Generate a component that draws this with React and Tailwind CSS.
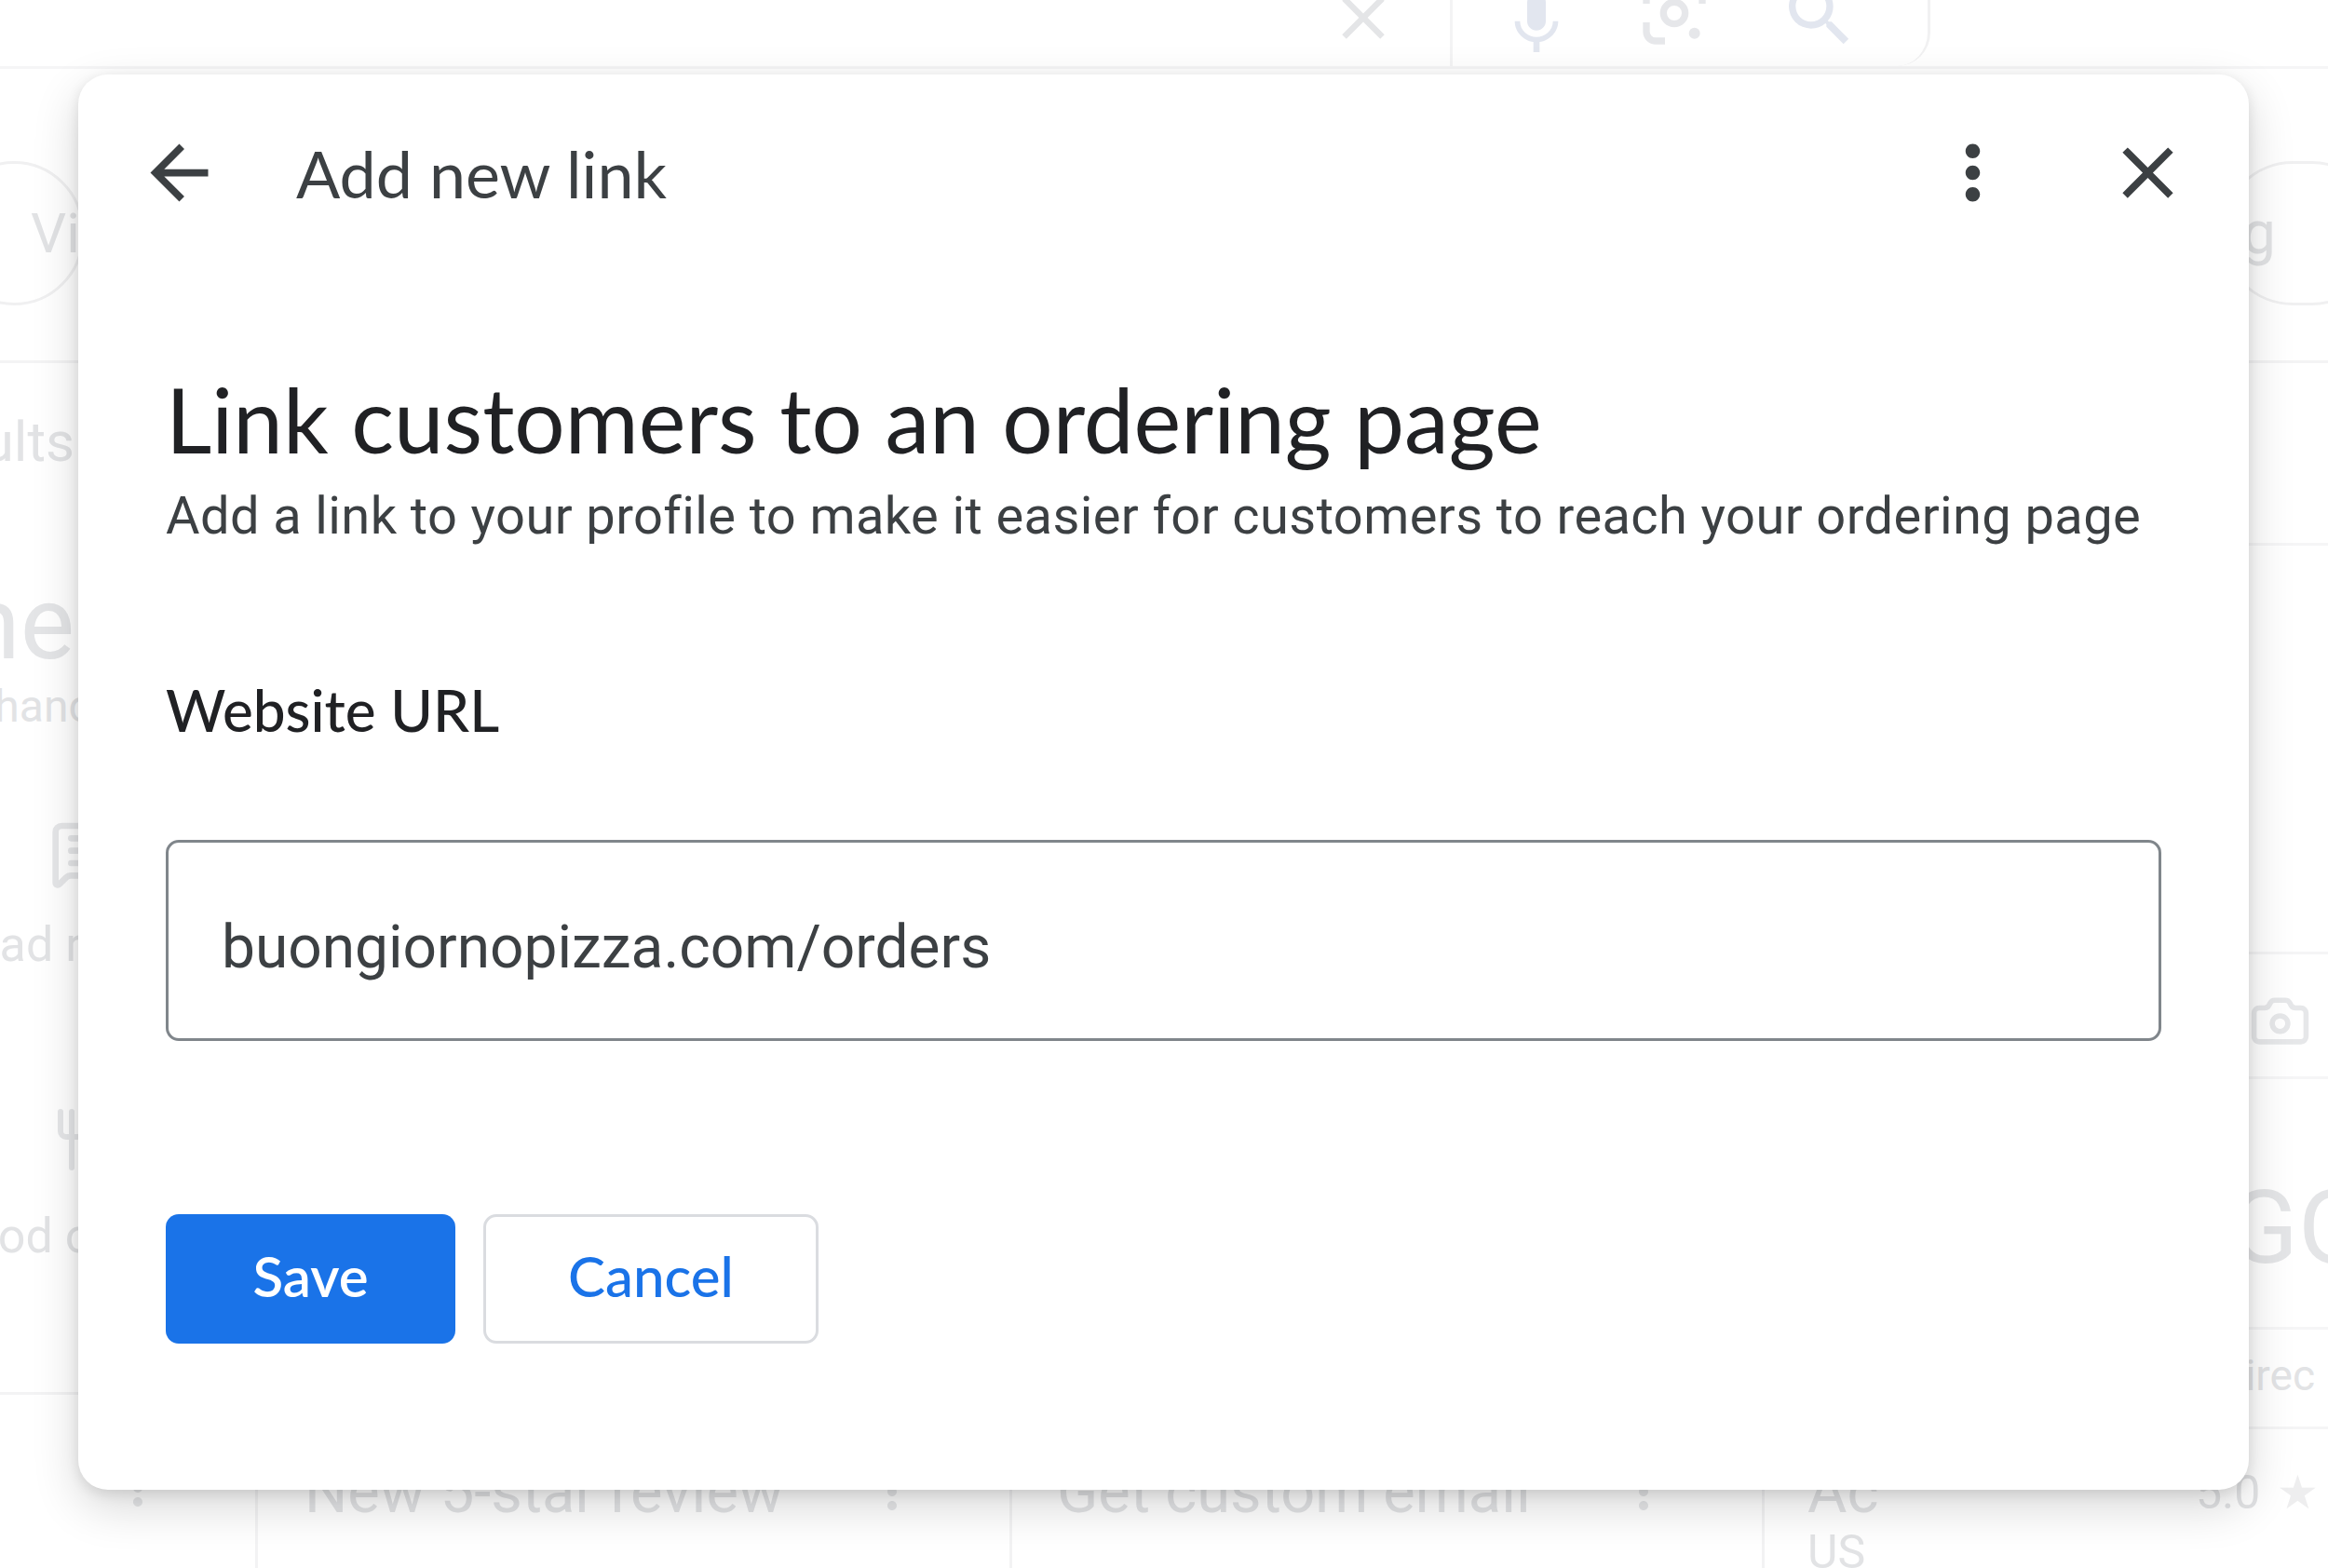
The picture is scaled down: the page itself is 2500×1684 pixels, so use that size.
import React from "react";
import { MessageSquareText, Utensils, Camera } from "lucide-react";

function ArrowBack() {
  return (
    <svg viewBox="0 0 24 24" className="w-[93px] h-[93px] shrink-0 fill-[#3c4043]">
      <path d="M20 11H7.83l5.59-5.59L12 4l-8 8 8 8 1.41-1.41L7.83 13H20v-2z" />
    </svg>
  );
}

function MoreVert({ className = "w-[93px] h-[93px] fill-[#3c4043]" }) {
  return (
    <svg viewBox="0 0 24 24" className={className}>
      <path d="M12 8c1.1 0 2-.9 2-2s-.9-2-2-2-2 .9-2 2 .9 2 2 2zm0 2c-1.1 0-2 .9-2 2s.9 2 2 2 2-.9 2-2-.9-2-2-2zm0 6c-1.1 0-2 .9-2 2s.9 2 2 2 2-.9 2-2-.9-2-2-2z" />
    </svg>
  );
}

function CloseIcon({ className = "w-[93px] h-[93px] shrink-0 fill-[#3c4043]" }) {
  return (
    <svg viewBox="0 0 24 24" className={className}>
      <path d="M19 6.41L17.59 5 12 10.59 6.41 5 5 6.41 10.59 12 5 17.59 6.41 19 12 13.41 17.59 19 19 17.59 13.41 12z" />
    </svg>
  );
}

function MicIcon() {
  return (
    <svg viewBox="0 0 24 24" className="w-[80px] h-[80px] shrink-0 fill-[#e2e6ef]">
      <path d="M12 14c1.66 0 3-1.34 3-3V5c0-1.66-1.34-3-3-3S9 3.34 9 5v6c0 1.66 1.34 3 3 3zm5.3-3c0 3-2.54 5.1-5.3 5.1S6.7 14 6.7 11H5c0 3.41 2.72 6.23 6 6.72V21h2v-3.28c3.28-.48 6-3.3 6-6.72h-1.7z" />
    </svg>
  );
}

function LensIcon() {
  return (
    <svg viewBox="0 0 24 24" className="w-[80px] h-[80px] shrink-0" fill="none" stroke="#e6e7ea" strokeWidth="2.2">
      <path d="M3 9V6a3 3 0 0 1 3-3h3M15 3h3a3 3 0 0 1 3 3v3M3 15v3a3 3 0 0 0 3 3h3" />
      <circle cx="12" cy="12" r="3.5" />
      <circle cx="18.5" cy="18.5" r="1.8" fill="#e6e7ea" stroke="none" />
    </svg>
  );
}

function SearchIcon() {
  return (
    <svg viewBox="0 0 24 24" className="w-[88px] h-[88px] shrink-0 fill-[#e2e6ef]">
      <path d="M15.5 14h-.79l-.28-.27A6.471 6.471 0 0 0 16 9.5 6.5 6.5 0 1 0 9.5 16c1.61 0 3.09-.59 4.230-1.57l.27.28v.79l5 4.99L20.49 19l-4.99-5zm-6 0C7.01 14 5 11.990 5 9.5S7.01 5 9.5 5 14 7.01 14 9.5 11.99 14 9.5 14z" />
    </svg>
  );
}

// faded page that sits behind the dialog
function Backdrop() {
  return (
    <div className="flex flex-col h-full font-['Roboto',sans-serif] text-[#e2e3e5]">
      {/* search bar */}
      <div className="h-[74px] shrink-0 flex border-b-[3px] border-[#f5f5f6]">
        <div className="ml-[1420px] w-[653px] h-[71px] flex items-start border-r-[3px] border-[#f1f1f2] rounded-br-[36px]">
          <div className="ml-[5px] -mt-[20px]">
            <CloseIcon className="w-[78px] h-[78px] fill-[#e4e5e7]" />
          </div>
          <div className="ml-[54px] w-[3px] h-[71px] bg-[#f3f3f4]" />
          <div className="ml-[50px] -mt-[14px]">
            <MicIcon />
          </div>
          <div className="ml-[68px] -mt-[26px]">
            <LensIcon />
          </div>
          <div className="ml-[72px] -mt-[28px]">
            <SearchIcon />
          </div>
        </div>
      </div>

      {/* chips */}
      <div className="h-[316px] shrink-0 flex items-start pt-[99px] border-b-[3px] border-[#f3f3f4]">
        <div className="-ml-[60px] w-[150px] h-[155px] shrink-0 rounded-full border-[3px] border-[#f0f0f1] flex items-center pl-[90px] text-[60px] whitespace-nowrap">
          Videos
        </div>
        <div className="ml-auto -mr-[60px] w-[175px] h-[155px] shrink-0 rounded-full border-[3px] border-[#f0f0f1] flex items-center pl-[20px] text-[64px]">
          g
        </div>
      </div>

      <div className="flex-1 flex">
        {/* left column */}
        <div className="w-[84px] shrink-0 flex flex-col">
          <div className="h-[1108px] flex flex-col items-end border-b-[3px] border-[#f3f3f4] whitespace-nowrap">
            <div className="mt-[50px] mr-[4px] text-[60px] leading-[70px]">Results</div>
            <div className="mt-[100px] mr-[4px] text-[110px] leading-[120px] text-[#e4e5e7]">Name</div>
            <div className="mt-[1px] -mr-[40px] text-[48px] leading-[56px]">Enhance</div>
            <MessageSquareText className="self-start ml-[53px] mt-[90px] w-[80px] h-[80px] text-[#e6e7e9]" strokeWidth={2} />
            <div className="self-start -ml-[60px] mt-[26px] text-[52px] leading-[64px]">Read reviews</div>
            <Utensils className="self-start ml-[56px] mt-[141px] w-[72px] h-[72px] text-[#e6e7e9]" strokeWidth={2} />
            <div className="self-start -ml-[60px] mt-[36px] text-[52px] leading-[64px]">Food orders</div>
          </div>
        </div>

        {/* center column, only the bottom cards peek out */}
        <div className="flex-1 flex flex-col">
          <div className="flex-1" />
          <div className="h-[184px] shrink-0 flex whitespace-nowrap text-[65px] leading-[70px]">
            <div className="w-[190px] shrink-0 flex pt-[68px] pl-[34px]">
              <MoreVert className="w-[60px] h-[60px] fill-[#e6e7e9]" />
            </div>
            <div className="w-[810px] shrink-0 flex items-start border-l-[3px] border-[#f3f3f4] pt-[67px] pl-[50px]">
              <span>New 5-star review</span>
              <MoreVert className="ml-auto mr-[96px] mt-[5px] w-[60px] h-[60px] fill-[#e6e7e9]" />
            </div>
            <div className="w-[808px] shrink-0 flex items-start border-l-[3px] border-[#f3f3f4] pt-[67px] pl-[48px]">
              <span>Get custom email</span>
              <MoreVert className="ml-auto mr-[97px] mt-[5px] w-[60px] h-[60px] fill-[#e6e7e9]" />
            </div>
            <div className="flex-1 flex flex-col border-l-[3px] border-[#f3f3f4] pt-[67px] pl-[46px]">
              <span>Ac</span>
              <span className="text-[50px] leading-[60px]">US</span>
            </div>
          </div>
        </div>

        {/* right column */}
        <div className="w-[85px] shrink-0 flex flex-col whitespace-nowrap">
          <div className="h-[196px] shrink-0 border-b-[3px] border-[#f5f5f6]" />
          <div className="h-[439px] shrink-0 border-b-[3px] border-[#f5f5f6]" />
          <div className="h-[134px] shrink-0 border-b-[3px] border-[#f5f5f6] pt-[38px]">
            <Camera className="w-[67px] h-[67px] text-[#e6e7e9]" strokeWidth={2} />
          </div>
          <div className="h-[269px] shrink-0 border-b-[3px] border-[#f5f5f6] pt-[100px] -ml-[22px] text-[110px] leading-[120px] text-[#e4e5e7]">
            GO
          </div>
          <div className="h-[107px] shrink-0 border-b-[3px] border-[#f5f5f6] pt-[22px] -ml-[34px] text-[46px] leading-[54px]">
            Direc
          </div>
          <div className="pt-[38px] -ml-[57px] text-[50px] leading-[60px] flex items-center gap-[18px]">
            <span>5.0</span>
            <span className="text-[#eeeeef]">★</span>
          </div>
        </div>
      </div>
    </div>
  );
}

export default function App() {
  return (
    <div className="relative w-[2500px] h-[1684px] overflow-hidden bg-white">
      <Backdrop />

      {/* dialog */}
      <div className="absolute left-[84px] top-[80px] w-[2331px] h-[1520px] rounded-[32px] bg-white flex flex-col shadow-[0_18px_50px_rgba(0,0,0,0.16),0_4px_14px_rgba(0,0,0,0.10)]">
        <div className="h-[211px] shrink-0 flex items-center px-[62px]">
          <ArrowBack />
          <h2 className="ml-[79px] font-['Lato',sans-serif] text-[70px] leading-[80px] text-[#3c4043]">
            Add new link
          </h2>
          <div className="ml-auto flex items-center gap-[95px]">
            <MoreVert />
            <CloseIcon />
          </div>
        </div>

        <div className="px-[94px] flex flex-col">
          <h1 className="mt-[103px] font-['Lato',sans-serif] text-[96px] leading-[112px] text-[#202124]">
            Link customers to an ordering page
          </h1>
          <p className="mt-[15px] font-['Roboto',sans-serif] text-[56px] leading-[66px] tracking-[0.4px] text-[#3c4043]">
            Add a link to your profile to make it easier for customers to reach your ordering page
          </p>
          <label className="mt-[138px] font-['Lato',sans-serif] font-medium text-[62px] leading-[74px] text-[#202124]">
            Website URL
          </label>
          <input
            readOnly
            value="buongiornopizza.com/orders"
            className="mt-[103px] h-[216px] w-full border-[3px] border-[#80868b] rounded-[14px] pl-[57px] pt-[14px] font-['Roboto',sans-serif] text-[64px] text-[#3c4043] outline-none"
          />
          <div className="mt-[186px] flex gap-[30px]">
            <button className="w-[311px] h-[139px] pb-[8px] rounded-[14px] bg-[#1a73e8] text-white font-['Lato',sans-serif] font-semibold text-[60px]">
              Save
            </button>
            <button className="w-[360px] h-[139px] pb-[8px] rounded-[14px] border-[3px] border-[#dadce0] bg-white text-[#1a73e8] font-['Lato',sans-serif] font-medium text-[60px]">
              Cancel
            </button>
          </div>
        </div>
      </div>
    </div>
  );
}
